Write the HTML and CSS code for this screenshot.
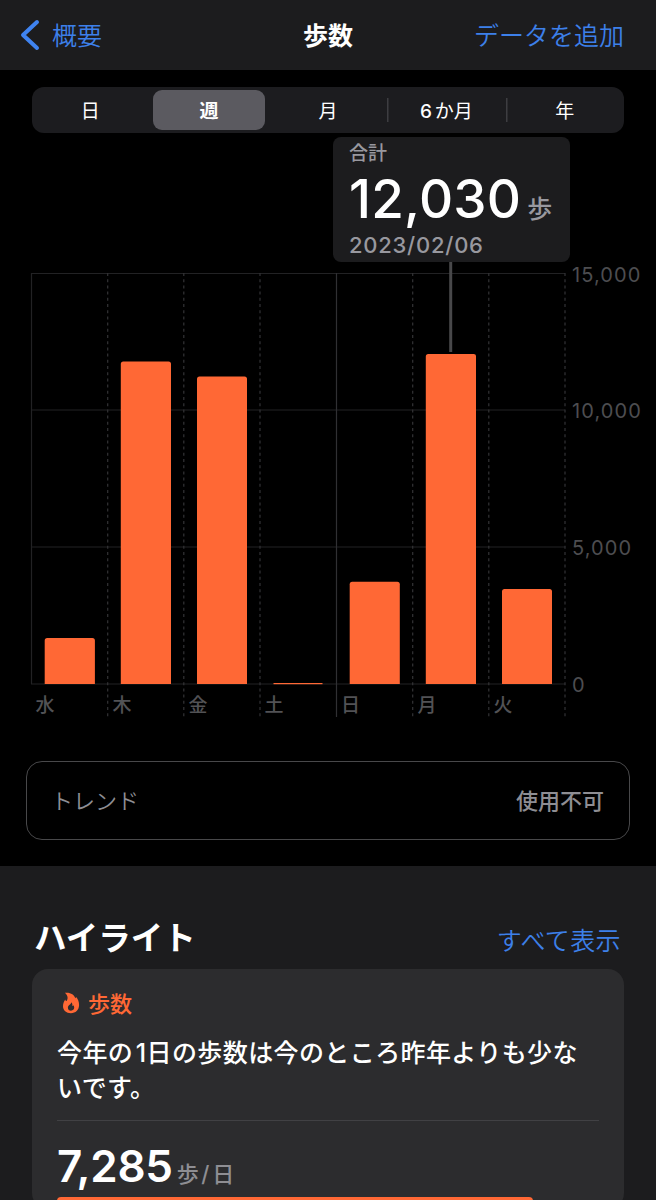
FILE: index.html
```
<!DOCTYPE html>
<html lang="ja">

<head>
    <meta charset="UTF-8">
    <meta name="viewport" content="width=device-width, initial-scale=1.0">
    <title>歩数</title>
    <link rel="stylesheet" href="styles.css">
</head>

<body>
    <header>
        <a class="back" href="#">
            <svg width="20" height="32" viewBox="0 0 20 32"><path d="M17 3 L3 16 L17 29" /></svg>
            <span>概要</span>
        </a>
        <h1>歩数</h1>
        <a class="add" href="#">データを追加</a>
    </header>

    <nav class="segments">
        <button>日</button>
        <button class="active">週</button>
        <button>月</button>
        <button class="divided"><span class="six">6</span>か月</button>
        <button class="divided">年</button>
    </nav>

    <section class="chart">
        <div class="tooltip">
            <div class="tooltip-label">合計</div>
            <div class="tooltip-value">12,030<span>歩</span></div>
            <div class="tooltip-date">2023/02/06</div>
        </div>
        <svg width="656" height="628" viewBox="0 133 656 628">
            <g class="grid">
                <path d="M31 273.5H565M31 410H565M31 547H565M31 684H565M31.5 273V684" />
                <path class="week" d="M336.5 273V717" />
                <path class="dashed" d="M107.7 273V717M183.8 273V717M260 273V717M412.7 273V717M488.8 273V717M565 273V717" />
            </g>
            <path class="marker" d="M450.7 262V352" />
            <g class="bars">
                <path d="M44.7 684V640.5a2.5 2.5 0 0 1 2.5-2.5H92.4a2.5 2.5 0 0 1 2.5 2.5V684z" />
                <path d="M120.8 684V364a2.5 2.5 0 0 1 2.5-2.5H168.5a2.5 2.5 0 0 1 2.5 2.5V684z" />
                <path d="M197 684V379a2.5 2.5 0 0 1 2.5-2.5H244.5a2.5 2.5 0 0 1 2.5 2.5V684z" />
                <rect x="273.5" y="683" width="49" height="1.2" />
                <path d="M349.7 684V584.3a2.5 2.5 0 0 1 2.5-2.5H397.3a2.5 2.5 0 0 1 2.5 2.5V684z" />
                <path d="M425.8 684V356.5a2.5 2.5 0 0 1 2.5-2.5H473.5a2.5 2.5 0 0 1 2.5 2.5V684z" />
                <path d="M502 684V591.5a2.5 2.5 0 0 1 2.5-2.5H549.5a2.5 2.5 0 0 1 2.5 2.5V684z" />
            </g>
            <g class="days">
                <text x="35.5" y="712">水</text>
                <text x="112.5" y="712">木</text>
                <text x="188.5" y="712">金</text>
                <text x="264.5" y="712">土</text>
                <text x="341" y="712">日</text>
                <text x="417.5" y="712">月</text>
                <text x="493.5" y="712">火</text>
            </g>
            <g class="scale">
                <text x="572" y="281.5">15,000</text>
                <text x="572" y="418">10,000</text>
                <text x="572" y="555">5,000</text>
                <text x="572" y="692">0</text>
            </g>
        </svg>
    </section>

    <div class="trend">
        <span>トレンド</span>
        <strong>使用不可</strong>
    </div>

    <main>
        <div class="heading">
            <h2>ハイライト</h2>
            <a href="#">すべて表示</a>
        </div>
        <article class="card">
            <div class="card-title">
                <svg width="18" height="22" viewBox="0 0 18 22">
                    <path fill-rule="evenodd" d="M2.8 0.8C8.8 0.2 12 2.6 13.3 6.2C13.8 6 14 5.4 13.9 4.7C16 6.8 17.1 9.8 17.1 13C17 18 13.6 21.2 8.9 21.2C4.2 21.2 1 18.2 1 14.2C1 11.4 2 8.9 3.4 7.4C3.5 8.4 3.9 8.9 4.5 8.9C6.2 7.4 6.2 3.4 2.8 0.8ZM9.4 10.2C9.3 12.2 5.9 12.9 5.9 15.7C5.9 17.5 7.2 18.7 9 18.7C10.9 18.7 12.2 17.4 12.2 15.6C12.2 14.7 11.9 13.9 11.3 13.3C11.1 13.8 10.8 14 10.3 14C10.6 12.7 10.3 11.2 9.4 10.2Z" />
                </svg>
                <span>歩数</span>
            </div>
            <p>今年の&hairsp;1日の歩数は今のところ昨年よりも少ないです。</p>
            <div class="average">7,285<span>歩<i>/</i>日</span></div>
            <div class="average-bar"></div>
        </article>
    </main>
</body>

</html>
```
FILE: styles.css
```
* {
    box-sizing: border-box;
}

body {
    margin: 0;
    height: 1200px;
    overflow: hidden;
    background-color: #000;
    color: #fff;
    font-family: Inter, "Noto Sans CJK JP", sans-serif;
    display: flex;
    flex-direction: column;
}

a {
    color: #3d80ea;
    text-decoration: none;
    font-size: 25px;
    font-weight: 350;
}

/* Top bar */
header {
    flex: none;
    height: 70px;
    padding: 0 32px 2px 20px;
    background-color: #1c1c1e;
    display: grid;
    grid-template-columns: 1fr auto 1fr;
    align-items: center;
}

header h1 {
    margin: 0;
    font-size: 25px;
    font-weight: 700;
    padding-left: 12px;
}

.add {
    text-align: right;
}

.back {
    display: flex;
    align-items: center;
    gap: 12px;
}

.back svg {
    margin-top: 2px;
    fill: none;
    stroke: #3f83f0;
    stroke-width: 4;
    stroke-linecap: round;
    stroke-linejoin: round;
}

/* Range picker */
.segments {
    flex: none;
    height: 46px;
    margin: 17px 32px 0;
    padding: 3px 0;
    border-radius: 12px;
    background-color: #1c1c1f;
    display: grid;
    grid-template-columns: repeat(5, 1fr);
}

.segments button {
    border: none;
    padding: 0 0 2px;
    background: none;
    color: #fff;
    font-family: inherit;
    font-size: 19px;
    font-weight: 400;
}

.segments button:first-child {
    padding-right: 2px;
}

.segments .active {
    margin: 0 4px 0 3px;
    border-radius: 9px;
    background-color: #5b5a60;
    font-weight: 700;
}

.segments .divided {
    background: linear-gradient(#3d3d41, #3d3d41) left center / 1.5px 24px no-repeat;
}

.six {
    font-weight: 500;
    margin-right: 3px;
}

/* Chart */
.chart {
    flex: none;
    height: 628px;
    position: relative;
}

.chart > svg {
    display: block;
}

.grid path {
    fill: none;
    stroke: #222224;
    stroke-width: 1.2;
}

.grid .week {
    stroke: #303033;
}

.grid .dashed {
    stroke: #333336;
    stroke-dasharray: 3 3.2;
}

.marker {
    stroke: #48484a;
    stroke-width: 3;
}

.bars path,
.bars rect {
    fill: #ff6835;
}

.days text {
    fill: #525255;
    font-size: 19px;
    font-weight: 500;
}

.scale text {
    fill: #4d4d50;
    font-size: 20px;
    letter-spacing: 1.1px;
}

.tooltip {
    position: absolute;
    left: 333px;
    top: 4px;
    width: 237px;
    height: 125px;
    padding: 5px 16px;
    border-radius: 8px;
    background-color: #1c1c1e;
    color: #98989f;
    white-space: nowrap;
}

.tooltip-label {
    font-size: 19px;
    line-height: 24px;
    font-weight: 500;
}

.tooltip-value {
    height: 66px;
    line-height: 66px;
    font-size: 53px;
    font-weight: 500;
    letter-spacing: 0.2px;
    color: #fff;
}

.tooltip-value span {
    margin-left: 6px;
    font-size: 25px;
    color: #98989f;
}

.tooltip-date {
    font-size: 22px;
    line-height: 26px;
    font-weight: 500;
    letter-spacing: 0.75px;
}

/* Trend row */
.trend {
    flex: none;
    height: 79px;
    margin: 0 26px;
    padding: 0 25px 3px 24px;
    border: 1.5px solid #48484a;
    border-radius: 16px;
    color: #8e8e93;
    font-size: 22px;
    display: flex;
    align-items: center;
    justify-content: space-between;
}

.trend span {
    font-weight: 350;
}

.trend strong {
    font-weight: 500;
}

/* Highlights */
main {
    flex: none;
    height: 334px;
    margin-top: 26px;
    padding: 48px 32px 0;
    background-color: #1c1c1e;
}

.heading {
    height: 55px;
    padding: 0 3px 0 2px;
    display: flex;
    justify-content: space-between;
}

.heading h2 {
    margin: 0;
    font-size: 32.5px;
    line-height: 50px;
    font-weight: 700;
}

.heading a {
    line-height: 54px;
    letter-spacing: 0.4px;
}

.card {
    height: 240px;
    padding: 18px 25px 0;
    border-radius: 16px;
    background-color: #2c2c2e;
}

.card-title {
    height: 30px;
    padding-left: 5px;
    display: flex;
    align-items: center;
    gap: 8px;
    color: #ff6835;
    font-size: 22px;
    font-weight: 500;
}

.card-title svg {
    margin-top: 2px;
    fill: #ff6835;
}

.card p {
    margin: 19px 0 0;
    height: 85px;
    padding-right: 10px;
    border-bottom: 1px solid #414144;
    font-size: 25px;
    line-height: 35px;
    font-weight: 500;
    letter-spacing: 0.4px;
}

.average {
    height: 76px;
    line-height: 91px;
    font-size: 44px;
    font-weight: 600;
    letter-spacing: -0.3px;
}

.average span {
    margin-left: 4px;
    color: #8e8e93;
    font-size: 22px;
    font-weight: 500;
}

.average i {
    font-style: normal;
    margin: 0 3px;
}

.average-bar {
    width: 476px;
    height: 12px;
    border-radius: 4px;
    background-color: #ff6835;
}
```
